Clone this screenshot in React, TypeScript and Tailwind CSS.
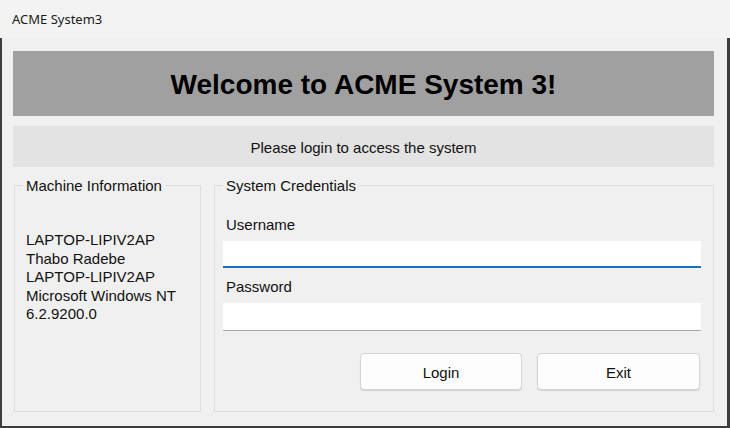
import React from "react";

export default function App() {
  const font = { fontFamily: '"Liberation Sans", Arial, sans-serif' };
  return (
    <div className="w-[730px] h-[428px] flex flex-col bg-[#f3f3f3] overflow-hidden" style={font}>
      <div className="h-[38px] shrink-0 flex items-center pl-[12px] pt-[2px] text-[13px] text-[#1a1a1a]" style={{ fontFamily: '"Noto Sans", "Liberation Sans", sans-serif' }}>
        ACME System3
      </div>
      <div className="flex-1 flex flex-col bg-[#f0f0f0] border-l-2 border-r-[3px] border-b-2 border-[#3c3c3c] text-[15px] text-[#111]">
        <div className="ml-[11px] mt-[13px] w-[701px] h-[65px] shrink-0 bg-[#a0a0a0] flex items-center justify-center pt-[2px] text-[28px] font-bold text-black">
          Welcome to ACME System 3!
        </div>
        <div className="ml-[11px] mt-[10px] w-[701px] h-[41px] shrink-0 bg-[#e3e3e3] flex items-center justify-center pt-[3px]">
          Please login to access the system
        </div>
        <div className="flex ml-[12px] mt-[10px] gap-[13px]">
          <fieldset className="w-[187px] h-[235px] border border-[#dcdcdc] rounded-none">
            <legend className="ml-[8px] px-[3px] leading-[17px]">Machine Information</legend>
            <div className="mt-[37px] ml-[11px] leading-[18.5px]">
              <div>LAPTOP-LIPIV2AP</div>
              <div>Thabo Radebe</div>
              <div>LAPTOP-LIPIV2AP</div>
              <div>Microsoft Windows NT</div>
              <div>6.2.9200.0</div>
            </div>
          </fieldset>
          <fieldset className="w-[500px] h-[235px] border border-[#dcdcdc] rounded-none">
            <legend className="ml-[8px] px-[3px] leading-[17px]">System Credentials</legend>
            <div className="ml-[8px] w-[478px] flex flex-col">
              <div className="mt-[22px] ml-[3px] leading-[18.5px]">Username</div>
              <input
                type="text"
                className="mt-[6px] h-[27px] w-full bg-white border-0 border-b-2 border-[#1a6fc6] outline-none px-1"
              />
              <div className="mt-[10px] ml-[3px] leading-[18.5px]">Password</div>
              <input
                type="password"
                className="mt-[7px] h-[28px] w-full bg-white border-0 border-b border-[#a8a8a8] outline-none px-1"
              />
              <div className="mt-[22px] flex justify-end gap-[15px] pr-[1px]">
                <button className="w-[162px] h-[37px] pt-[3px] bg-[#fdfdfd] border border-[#d4d4d4] rounded-[4px] shadow-[0_1px_1px_rgba(0,0,0,0.12)] text-[15px] text-[#111]">
                  Login
                </button>
                <button className="w-[163px] h-[37px] pt-[3px] bg-[#fdfdfd] border border-[#d4d4d4] rounded-[4px] shadow-[0_1px_1px_rgba(0,0,0,0.12)] text-[15px] text-[#111]">
                  Exit
                </button>
              </div>
            </div>
          </fieldset>
        </div>
      </div>
    </div>
  );
}
